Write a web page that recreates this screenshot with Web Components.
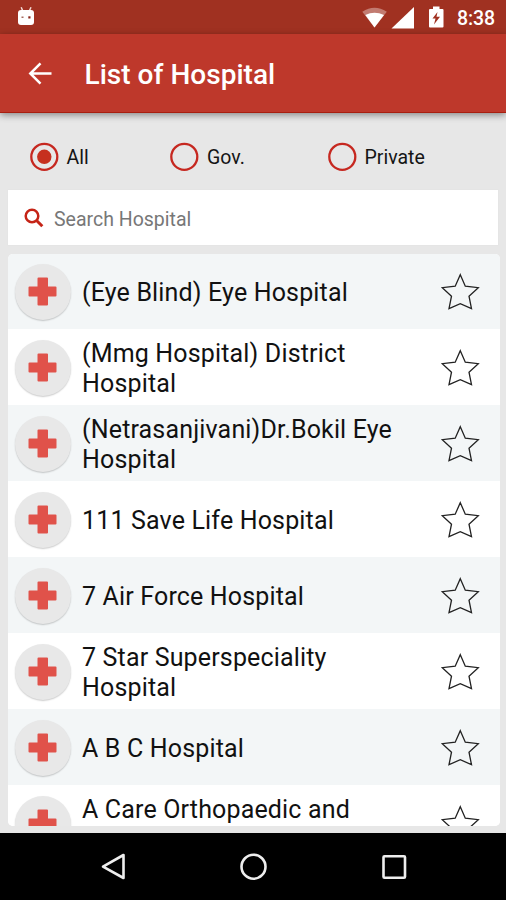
<!DOCTYPE html>
<html lang="en">
<head>
<meta charset="utf-8">
<title>List of Hospital</title>
<style>
html, body { margin: 0; height: 100%; }
body { font-family: Roboto, "Noto Sans", sans-serif; background: #e7e7e7; overflow: hidden; }
</style>
</head>
<body>
<hospital-app></hospital-app>
<script>
const define = (name, html) => customElements.define(name, class extends HTMLElement {
  constructor() {
    super();
    const t = document.createElement('template');
    t.innerHTML = html;
    this.attachShadow({ mode: 'open' }).append(t.content.cloneNode(true));
  }
});

define('status-bar', `
<style>
:host { display: flex; height: 34px; flex: none; background: #a03121; color: #fff; }
svg { display: block; width: 445px; height: 34px; flex: none; }
span { font-size: 19.5px; font-weight: 500; line-height: 37px; margin-left: 12px; letter-spacing: -.1px; }
</style>
<svg viewBox="0 0 445 34" fill="#fff">
  <path d="M21.2 7.2 22.8 11M31 7.2 29.3 11" stroke="#f3d9d3" stroke-width="1.5"/>
  <rect x="18" y="10" width="16" height="15" rx="3"/>
  <rect x="21.5" y="16.5" width="2" height="1.5" fill="#a56a60"/><rect x="28.3" y="16.3" width="2.2" height="2.2" fill="#8a2418"/>
  <path d="M362.300 11.800Q374.500 3.500 386.800 11.800L374.500 27.500Z" opacity=".36"/>
  <path d="M365.300 15Q374.500 10.500 384 15L374.500 27.500Z"/>
  <path d="M414 7V28.500H391.500Z"/>
  <path fill-rule="evenodd" d="M430 9H433V6.500H439.500V9H442.500Q443.500 9 443.500 10V26.500Q443.500 27.500 442.500 27.500H430Q429 27.500 429 26.500V10Q429 9 430 9ZM437.500 12 432.500 18.500H435.500L434 24.500 440 16.800H436.500Z"/>
</svg>
<span>8:38</span>`);

define('app-bar', `
<style>
:host { display: flex; align-items: center; box-sizing: border-box; height: 79px; flex: none; padding-left: 27px; background: #be382b; border-bottom: 1px solid #a81f10; color: #fff; box-shadow: 0 2px 7px rgba(0,0,0,.42); z-index: 1; position: relative; }
svg { width: 26px; height: 26px; margin-right: 31.500px; display: block; }
h1 { font-size: 28px; font-weight: 500; margin: 4px 0 0; line-height: 32px; white-space: nowrap; letter-spacing: .03px; }
</style>
<svg viewBox="0 0 26 26" fill="none" stroke="#fff" stroke-width="2.500"><path d="M24.500 13.500H3.500M13.500 3.300 3.300 13.500 13.500 23.700"/></svg>
<h1><slot></slot></h1>`);

define('radio-option', `
<style>
:host { display: flex; align-items: center; gap: 8px; font-size: 19.5px; line-height: 28px; color: #151515; white-space: nowrap; }
svg { width: 30px; height: 30px; display: block; }
span { padding-top: 2px; }
circle.dot { display: none; }
:host([checked]) circle.dot { display: block; }
</style>
<svg viewBox="0 0 30 30"><circle cx="15.300" cy="14.800" r="13" fill="none" stroke="#c62820" stroke-width="2.300"/><circle class="dot" cx="15.300" cy="14.800" r="7.200" fill="#c6301f"/></svg>
<span><slot></slot></span>`);

define('search-field', `
<style>
:host { display: flex; align-items: center; height: 55px; background: #fff; box-shadow: 0 0 1px #ddd; color: #777; font-size: 19.5px; }
svg { width: 20px; height: 20px; margin: 1px 10px 0 16px; display: block; }
span { padding-top: 3px; }
</style>
<svg viewBox="0 0 20 20" fill="none" stroke="#c52417"><circle cx="8" cy="8" r="6.300" stroke-width="2.500"/><path d="M12.800 12.800 18.300 18.300" stroke-width="3"/></svg>
<span><slot></slot></span>`);

define('hospital-row', `
<style>
:host { display: flex; align-items: center; box-sizing: border-box; height: 75.950px; padding-top: 1px; flex: none; background: #fff; color: #111; }
:host(:nth-child(odd)) { background: #f3f6f7; }
.badge { width: 56px; height: 56px; border-radius: 50%; background: #e8e8e8; box-shadow: 0 1px 1.500px rgba(0,0,0,.2); margin: 0 11.500px 0 6.500px; flex: none; }
.badge svg { width: 56px; height: 56px; display: block; }
.name { width: 340px; font-size: 25px; line-height: 29.500px; letter-spacing: .16px; margin-top: 2px; }
:host([tall]) .name { min-height: 59px; }
.star { width: 40px; height: 40px; margin-left: 18px; flex: none; }
</style>
<div class="badge"><svg viewBox="0 0 56 56"><path d="M23.500 13.500H32Q33 13.500 33 14.500V22.500H40.500Q41.500 22.500 41.500 23.500V31.500Q41.500 32.500 40.500 32.500H33V40.500Q33 41.500 32 41.500H23.500Q22.500 41.500 22.500 40.500V32.500H14.500Q13.500 32.500 13.500 31.500V23.500Q13.500 22.500 14.500 22.500H22.500V14.500Q22.500 13.500 23.500 13.500Z" fill="#e0524a"/></svg></div>
<div class="name"><slot></slot></div>
<svg class="star" viewBox="0 0 40 40" fill="none" stroke="#222" stroke-width="1.300"><path d="M20.300 2.700 25.300 14.200 38.300 15.700 29 24.200 31.500 36.700 20.300 31.700 9 36.700 11.500 24.200 2.300 15.700 15.200 14.200Z"/></svg>`);

define('hospital-list', `
<style>
:host { display: flex; flex-direction: column; height: 572.500px; margin: 8.500px -2px 0 0; overflow: hidden; border-radius: 5px; background: #fff; }
</style><slot></slot>`);

define('nav-bar', `
<style>
:host { display: block; height: 67px; flex: none; background: #000; }
svg { display: block; }
</style>
<svg width="506" height="67" fill="none" stroke="#eee" stroke-width="2.600" stroke-linejoin="round"><path d="M123.500 22V45L103 33.700Z"/><circle cx="253.500" cy="33.700" r="12"/><rect x="383.500" y="23.200" width="21.500" height="21.500" rx="1"/></svg>`);

define('hospital-app', `
<style>
:host { display: flex; flex-direction: column; width: 506px; height: 900px; background: #e7e7e7; }
main { flex: 1; min-height: 0; padding: 0 8px; }
.filters { display: grid; grid-template-columns: 140.500px 157.500px auto; padding: 29px 0 18px 20.500px; height: 30px; }
</style>
<status-bar></status-bar>
<app-bar>List of Hospital</app-bar>
<main>
  <div class="filters"><radio-option checked>All</radio-option><radio-option>Gov.</radio-option><radio-option>Private</radio-option></div>
  <search-field>Search Hospital</search-field>
  <hospital-list>
    <hospital-row>(Eye Blind) Eye Hospital</hospital-row>
    <hospital-row>(Mmg Hospital) District Hospital</hospital-row>
    <hospital-row>(Netrasanjivani)Dr.Bokil Eye Hospital</hospital-row>
    <hospital-row>111 Save Life Hospital</hospital-row>
    <hospital-row>7 Air Force Hospital</hospital-row>
    <hospital-row>7 Star Superspeciality Hospital</hospital-row>
    <hospital-row>A B C Hospital</hospital-row>
    <hospital-row tall>A Care Orthopaedic and</hospital-row>
  </hospital-list>
</main>
<nav-bar></nav-bar>`);
</script>
</body>
</html>
